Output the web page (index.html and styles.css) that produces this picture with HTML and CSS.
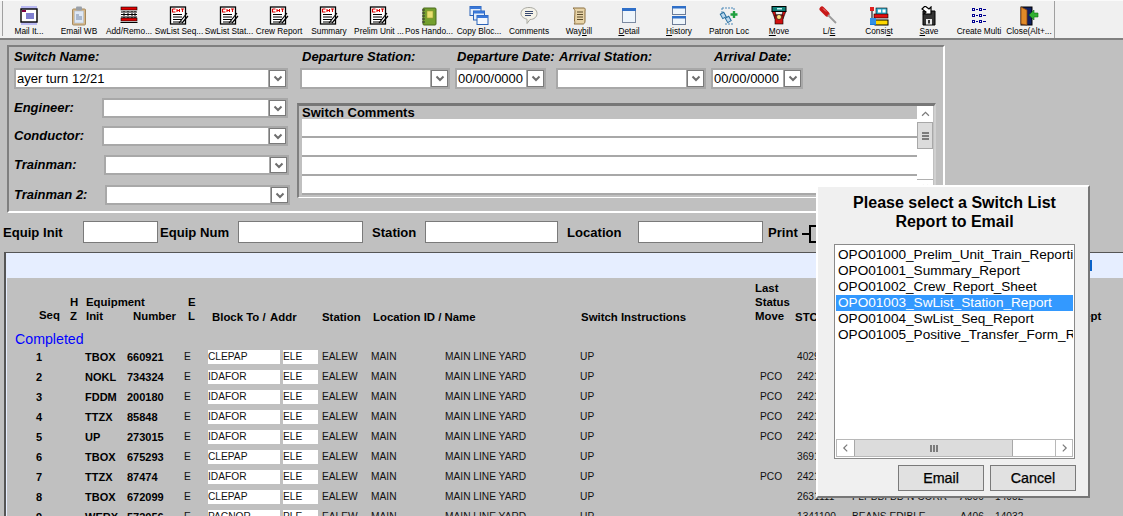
FILE: index.html
```html
<!DOCTYPE html>
<html lang="en">
<head>
<meta charset="utf-8">
<title>Switch List</title>
<link rel="stylesheet" href="styles.css">
</head>
<body>
<svg class="defs" width="0" height="0" aria-hidden="true">
  <symbol id="i-mail" viewBox="0 0 20 20">
    <rect x="2" y="0" width="16" height="19" fill="#b9b9f2"/>
    <rect x="2" y="3" width="16" height="13" fill="#fff" stroke="#000" stroke-width="1.4"/>
    <rect x="3" y="4" width="4" height="2" fill="#800040"/>
    <path d="M7 8h8M7 10h8M7 12h8" stroke="#0000a0" stroke-width="1.2"/>
  </symbol>
  <symbol id="i-clip" viewBox="0 0 20 20">
    <rect x="3.500" y="3" width="13" height="16" rx="1" fill="#d8b888" stroke="#a58a60"/>
    <rect x="5.500" y="5" width="9" height="12" fill="#dfe8f5" stroke="#b0bccc" stroke-width=".6"/>
    <rect x="7" y="0.500" width="6" height="4" rx="1" fill="#9aa0a8"/>
    <path d="M7 9h3M7 11h6M7 13h6" stroke="#7488a8"/>
  </symbol>
  <symbol id="i-grid" viewBox="0 0 20 20">
    <rect x="2" y="1" width="16" height="15" fill="#fff"/>
    <rect x="2" y="1" width="16" height="3" fill="#e00000" stroke="#000" stroke-width=".6"/>
    <rect x="2" y="12" width="16" height="3" fill="#e00000" stroke="#000" stroke-width=".6"/>
    <path d="M2 6h16M2 8.500h16M2 11h16M1.500 16.500h17" stroke="#000"/>
    <path d="M5 5v7M9 5v7M13 5v7M16 5v7" stroke="#000" stroke-dasharray="1 1"/>
  </symbol>
  <symbol id="i-report" viewBox="0 0 20 20">
    <rect x="1.500" y="1" width="15" height="17" fill="#fff" stroke="#000" stroke-width="1.300"/>
    <path d="M3.500 3h3M3.500 3v3h3M8 3v3M10.500 3v3M8 4.500h2.500M12 3h3M13.500 3v3" stroke="#e00000" fill="none" stroke-width="1.100"/>
    <path d="M4 8.500h9M4 11h9M4 13.500h9M4 16h9" stroke="#000" stroke-width="1.100"/>
    <path d="M18 7L10 17M19 10L13 17" stroke="#000" stroke-width="1.200"/>
  </symbol>
  <symbol id="i-book" viewBox="0 0 20 20">
    <rect x="4" y="2" width="13" height="17" rx="1" fill="#74a02e" stroke="#4b6a1c"/>
    <rect x="8" y="5" width="6" height="7" fill="#e8e070" stroke="#9a9a30" stroke-width=".6"/>
    <path d="M3 4h3M3 7h3M3 10h3M3 13h3M3 16h3" stroke="#333"/>
  </symbol>
  <symbol id="i-copy" viewBox="0 0 20 20">
    <rect x="1" y="0.500" width="11" height="9" fill="#e4eefb" stroke="#2a62b8"/>
    <rect x="1" y="0.500" width="11" height="2.500" fill="#3a78d8"/>
    <rect x="4.500" y="5" width="11" height="9" fill="#e4eefb" stroke="#2a62b8"/>
    <rect x="4.500" y="5" width="11" height="2.500" fill="#3a78d8"/>
    <rect x="8" y="9.500" width="11" height="9" fill="#f4f8fe" stroke="#2a62b8"/>
    <rect x="8" y="9.500" width="11" height="2.500" fill="#3a78d8"/>
  </symbol>
  <symbol id="i-bubble" viewBox="0 0 20 20">
    <path d="M10 1.500c5 0 8 2.500 8 6s-3 6-7 6l-3 4v-4.300c-3-.7-6-2.500-6-5.700 0-3.500 3-6 8-6z" fill="#f4f2e8" stroke="#a8a8a0"/>
    <path d="M6 5.500h8M6 7.500h8M6 9.500h6" stroke="#3a4a70"/>
  </symbol>
  <symbol id="i-scroll" viewBox="0 0 20 20">
    <path d="M4 2h11c1 0 1.500 1 1 3v10c0 2-1 3-2 3H5c1-1 1-2 .5-3l.5-10C6 4 5 3 4 2z" fill="#e8d4a8" stroke="#8a6e3e"/>
    <path d="M8 6h6M8 8.500h6M8 11h6M8 13.500h6" stroke="#5a4a2a"/>
  </symbol>
  <symbol id="i-window" viewBox="0 0 20 20">
    <rect x="3.500" y="2.500" width="13" height="14" fill="#eef5fb" stroke="#7c8aa0"/>
    <rect x="3" y="2" width="14" height="3" fill="#2f6fc8"/>
  </symbol>
  <symbol id="i-history" viewBox="0 0 20 20">
    <rect x="3.500" y="0.500" width="13" height="8" fill="#eef5fb" stroke="#6c7c98"/>
    <rect x="3" y="0" width="14" height="2.500" fill="#2f6fc8"/>
    <rect x="3.500" y="10.500" width="13" height="8" fill="#eef5fb" stroke="#6c7c98"/>
    <rect x="3" y="10" width="14" height="2.500" fill="#2f6fc8"/>
  </symbol>
  <symbol id="i-patron" viewBox="0 0 20 20">
    <path d="M3 2h12v5M3 2v6M6 18h8" stroke="#4a88b8" stroke-dasharray="2 1" fill="none"/>
    <rect x="2" y="7" width="4" height="5" fill="#bcd8ee" stroke="#2a70a0" transform="rotate(-30 4 9)"/>
    <rect x="7" y="11" width="4" height="5" fill="#bcd8ee" stroke="#2a70a0" transform="rotate(-30 9 13)"/>
    <path d="M15 5v7M11.500 8.500h7" stroke="#20a040" stroke-width="2.400"/>
  </symbol>
  <symbol id="i-move" viewBox="0 0 20 20">
    <path d="M3 5l3 8h8l3-8h-3l-1 4h-6l-1-4z" fill="#d01010" stroke="#000" stroke-width=".6"/>
    <rect x="6" y="9" width="8" height="9" fill="#d01010" stroke="#000" stroke-width=".6"/>
    <circle cx="10" cy="11" r="2.500" fill="#ffe080" stroke="#000" stroke-width=".6"/>
    <rect x="3" y="0.500" width="14" height="5" fill="#108078" stroke="#000"/>
    <rect x="8" y="2" width="5" height="1.500" fill="#c8f0f0"/>
  </symbol>
  <symbol id="i-driver" viewBox="0 0 20 20">
    <path d="M3 3l5 5" stroke="#c81818" stroke-width="5" stroke-linecap="round"/>
    <path d="M4 2.500l3 3" stroke="#f08080" stroke-width="1"/>
    <path d="M9 9l8 8" stroke="#9a9a9a" stroke-width="1.800"/>
  </symbol>
  <symbol id="i-consist" viewBox="0 0 20 20">
    <rect x="7" y="2" width="11" height="8" fill="#30b0d0" stroke="#000" stroke-width=".6"/>
    <rect x="9" y="3.500" width="3" height="3" fill="#fff"/><rect x="13.500" y="3.500" width="3" height="3" fill="#fff"/>
    <path d="M1 1h4v4H1z" fill="#e02020"/>
    <path d="M3 5v7" stroke="#000"/>
    <rect x="5" y="8" width="14" height="4" fill="#e01010" stroke="#000" stroke-width=".6"/>
    <rect x="6" y="14" width="13" height="5" fill="#ffd800" stroke="#000" stroke-width="1"/>
    <rect x="1" y="12" width="6" height="7" fill="#1078e0"/>
    <path d="M1.500 13h5M1.500 15h5M1.500 17h5" stroke="#8fd8ff" stroke-dasharray="1 1"/>
  </symbol>
  <symbol id="i-save" viewBox="0 0 20 20">
    <path d="M4 5h12v14H4z" fill="#333" stroke="#000"/>
    <rect x="7" y="13" width="6" height="5.500" fill="#e8e8e8"/>
    <rect x="9" y="14" width="2" height="3.500" fill="#333"/>
    <path d="M6 0l4 3 2-2v7H5l2-2-4-3z" fill="#fff" stroke="#000" stroke-width="1.200"/>
  </symbol>
  <symbol id="i-multi" viewBox="0 0 20 20">
    <g fill="#fff" stroke="#000090">
      <rect x="3.500" y="2.500" width="2" height="2"/><rect x="10.500" y="2.500" width="2" height="2"/>
      <rect x="3.500" y="8.500" width="2" height="2"/><rect x="10.500" y="8.500" width="2" height="2"/>
      <rect x="3.500" y="14.500" width="2" height="2"/><rect x="10.500" y="14.500" width="2" height="2"/>
    </g>
    <path d="M7 3.500h2M14 3.500h3M7 9.500h2M14 9.500h3M7 15.500h2M14 15.500h3" stroke="#000090"/>
  </symbol>
  <symbol id="i-door" viewBox="0 0 20 20">
    <rect x="2" y="1" width="11" height="18" fill="#102060" stroke="#000"/>
    <path d="M2 1l6 3v15l-6-1z" fill="#e08a28" stroke="#804010" stroke-width=".8"/>
    <path d="M19 7h-4V4l-5 5 5 5v-3h4z" fill="#30b030" stroke="#107010" stroke-width=".6"/>
  </symbol>
  <symbol id="i-chev" viewBox="0 0 10 7">
    <path d="M1.500 1.500L5 5l3.500-3.500" fill="none" stroke="#6e6e6e" stroke-width="2"/>
  </symbol>
  <symbol id="i-chev-up" viewBox="0 0 10 7">
    <path d="M1 5.500L5 1.500l4 4" fill="none" stroke="#7a7a7a" stroke-width="1.400"/>
  </symbol>
</svg>

<div class="page">
  <nav class="toolbar">
    <a class="tool"><svg class="icon"><use href="#i-mail"/></svg><span>Mail It...</span></a>
    <a class="tool"><svg class="icon"><use href="#i-clip"/></svg><span>Email WB</span></a>
    <a class="tool"><svg class="icon"><use href="#i-grid"/></svg><span>Add/Remo...</span></a>
    <a class="tool"><svg class="icon"><use href="#i-report"/></svg><span>SwList Seq...</span></a>
    <a class="tool"><svg class="icon"><use href="#i-report"/></svg><span>SwList Stat...</span></a>
    <a class="tool"><svg class="icon"><use href="#i-report"/></svg><span>Crew Report</span></a>
    <a class="tool"><svg class="icon"><use href="#i-report"/></svg><span>Summary</span></a>
    <a class="tool"><svg class="icon"><use href="#i-report"/></svg><span>Prelim Unit ...</span></a>
    <a class="tool"><svg class="icon"><use href="#i-book"/></svg><span>Pos Hando...</span></a>
    <a class="tool"><svg class="icon"><use href="#i-copy"/></svg><span>Copy Bloc...</span></a>
    <a class="tool"><svg class="icon"><use href="#i-bubble"/></svg><span>Comments</span></a>
    <a class="tool"><svg class="icon"><use href="#i-scroll"/></svg><span>Way<u>b</u>ill</span></a>
    <a class="tool"><svg class="icon"><use href="#i-window"/></svg><span><u>D</u>etail</span></a>
    <a class="tool"><svg class="icon"><use href="#i-history"/></svg><span><u>H</u>istory</span></a>
    <a class="tool"><svg class="icon"><use href="#i-patron"/></svg><span>Patron Loc</span></a>
    <a class="tool"><svg class="icon"><use href="#i-move"/></svg><span><u>M</u>ove</span></a>
    <a class="tool"><svg class="icon"><use href="#i-driver"/></svg><span>L/<u>E</u></span></a>
    <a class="tool"><svg class="icon"><use href="#i-consist"/></svg><span>Consi<u>s</u>t</span></a>
    <a class="tool"><svg class="icon"><use href="#i-save"/></svg><span><u>S</u>ave</span></a>
    <a class="tool"><svg class="icon"><use href="#i-multi"/></svg><span>Create Multi</span></a>
    <a class="tool"><svg class="icon"><use href="#i-door"/></svg><span>Close(Alt+...</span></a>
    <div class="toolbar-rest"></div>
  </nav>

  <section class="form">
    <div class="form-top">
      <div class="field f-name"><label class="flabel">Switch Name:</label>
        <div class="combo"><div class="combo-val">ayer turn 12/21</div><div class="combo-btn"><svg class="chev"><use href="#i-chev"/></svg></div></div></div>
      <div class="field f-dep"><label class="flabel">Departure Station:</label>
        <div class="combo"><div class="combo-val"></div><div class="combo-btn"><svg class="chev"><use href="#i-chev"/></svg></div></div></div>
      <div class="field f-date"><label class="flabel">Departure Date:</label>
        <div class="combo"><div class="combo-val">00/00/0000</div><div class="combo-btn"><svg class="chev"><use href="#i-chev"/></svg></div></div></div>
      <div class="field f-arr"><label class="flabel">Arrival Station:</label>
        <div class="combo"><div class="combo-val"></div><div class="combo-btn"><svg class="chev"><use href="#i-chev"/></svg></div></div></div>
      <div class="field f-date f-date-last"><label class="flabel">Arrival Date:</label>
        <div class="combo"><div class="combo-val">00/00/0000</div><div class="combo-btn"><svg class="chev"><use href="#i-chev"/></svg></div></div></div>
    </div>
    <div class="form-lower">
      <div class="crew">
        <div class="crew-row r-eng"><label class="flabel">Engineer:</label>
          <div class="combo"><div class="combo-val"></div><div class="combo-btn"><svg class="chev"><use href="#i-chev"/></svg></div></div></div>
        <div class="crew-row r-con"><label class="flabel">Conductor:</label>
          <div class="combo"><div class="combo-val"></div><div class="combo-btn"><svg class="chev"><use href="#i-chev"/></svg></div></div></div>
        <div class="crew-row r-tr1"><label class="flabel">Trainman:</label>
          <div class="combo"><div class="combo-val"></div><div class="combo-btn"><svg class="chev"><use href="#i-chev"/></svg></div></div></div>
        <div class="crew-row r-tr2"><label class="flabel">Trainman 2:</label>
          <div class="combo"><div class="combo-val"></div><div class="combo-btn"><svg class="chev"><use href="#i-chev"/></svg></div></div></div>
      </div>
      <div class="comments">
        <div class="comments-main">
          <div class="comments-title">Switch Comments</div>
          <div class="comment-line"></div>
          <div class="comment-line"></div>
          <div class="comment-line"></div>
          <div class="comment-line"></div>
        </div>
        <div class="vscroll">
          <div class="vbtn"><svg class="chev-up"><use href="#i-chev-up"/></svg></div>
          <div class="vthumb"><i></i><i></i><i></i></div>
          <div class="vtrack"></div>
          <div class="vbtn vbtn-end"><svg class="chev-up"><use href="#i-chev"/></svg></div>
        </div>
      </div>
    </div>
  </section>

  <div class="search">
    <label class="slabel s1">Equip Init</label><input class="sinput w-init" type="text">
    <label class="slabel s2">Equip Num</label><input class="sinput w-num" type="text">
    <label class="slabel s3 s-sta">Station</label><input class="sinput w-sta" type="text">
    <label class="slabel s3 s-loc">Location</label><input class="sinput w-loc" type="text">
    <label class="slabel s4">Print</label>
    <span class="tree"></span>
  </div>

  <section class="list">
    <div class="list-strip"><span class="strip-mark"></span></div>
    <div class="list-body">
      <table class="grid">
        <colgroup>
          <col class="c-seq"><col class="c-hz"><col class="c-init"><col class="c-num"><col class="c-e"><col class="c-block"><col class="c-addr"><col class="c-sta"><col class="c-loc"><col class="c-name"><col class="c-ins"><col class="c-last"><col class="c-stc"><col class="c-desc"><col class="c-a"><col class="c-b"><col class="c-rest">
        </colgroup>
        <thead>
          <tr>
            <th class="th-seq">Seq</th>
            <th class="th-hz">H<br>Z</th>
            <th class="th-init">Equipment<br>Init</th>
            <th class="th-num">Number</th>
            <th class="th-e">E<br>L</th>
            <th class="th-block" colspan="2"><span class="block-to">Block To /</span><span>Addr</span></th>
            <th class="th-sta">Station</th>
            <th class="th-loc" colspan="2">Location ID / Name</th>
            <th class="th-ins">Switch Instructions</th>
            <th class="th-last">Last<br>Status<br>Move</th>
            <th class="th-stc">STC</th>
            <th></th><th></th><th></th>
            <th class="th-dept">Dept</th>
          </tr>
        </thead>
        <tbody>
          <tr class="group"><td colspan="17">Completed</td></tr>
          <tr><td class="seq">1</td><td></td><td class="b">TBOX</td><td class="b">660921</td><td>E</td><td><span class="cell-in">CLEPAP</span></td><td><span class="cell-in">ELE</span></td><td>EALEW</td><td>MAIN</td><td>MAIN LINE YARD</td><td>UP</td><td class="pco"></td><td class="stc">4029110</td><td></td><td></td><td></td><td></td></tr>
          <tr><td class="seq">2</td><td></td><td class="b">NOKL</td><td class="b">734324</td><td>E</td><td><span class="cell-in">IDAFOR</span></td><td><span class="cell-in">ELE</span></td><td>EALEW</td><td>MAIN</td><td>MAIN LINE YARD</td><td>UP</td><td class="pco">PCO</td><td class="stc">2421120</td><td></td><td></td><td></td><td></td></tr>
          <tr><td class="seq">3</td><td></td><td class="b">FDDM</td><td class="b">200180</td><td>E</td><td><span class="cell-in">IDAFOR</span></td><td><span class="cell-in">ELE</span></td><td>EALEW</td><td>MAIN</td><td>MAIN LINE YARD</td><td>UP</td><td class="pco">PCO</td><td class="stc">2421120</td><td></td><td></td><td></td><td></td></tr>
          <tr><td class="seq">4</td><td></td><td class="b">TTZX</td><td class="b">85848</td><td>E</td><td><span class="cell-in">IDAFOR</span></td><td><span class="cell-in">ELE</span></td><td>EALEW</td><td>MAIN</td><td>MAIN LINE YARD</td><td>UP</td><td class="pco">PCO</td><td class="stc">2421120</td><td></td><td></td><td></td><td></td></tr>
          <tr><td class="seq">5</td><td></td><td class="b">UP</td><td class="b">273015</td><td>E</td><td><span class="cell-in">IDAFOR</span></td><td><span class="cell-in">ELE</span></td><td>EALEW</td><td>MAIN</td><td>MAIN LINE YARD</td><td>UP</td><td class="pco">PCO</td><td class="stc">2421120</td><td></td><td></td><td></td><td></td></tr>
          <tr><td class="seq">6</td><td></td><td class="b">TBOX</td><td class="b">675293</td><td>E</td><td><span class="cell-in">CLEPAP</span></td><td><span class="cell-in">ELE</span></td><td>EALEW</td><td>MAIN</td><td>MAIN LINE YARD</td><td>UP</td><td class="pco"></td><td class="stc">3691100</td><td></td><td></td><td></td><td></td></tr>
          <tr><td class="seq">7</td><td></td><td class="b">TTZX</td><td class="b">87474</td><td>E</td><td><span class="cell-in">IDAFOR</span></td><td><span class="cell-in">ELE</span></td><td>EALEW</td><td>MAIN</td><td>MAIN LINE YARD</td><td>UP</td><td class="pco">PCO</td><td class="stc">2421120</td><td></td><td></td><td></td><td></td></tr>
          <tr><td class="seq">8</td><td></td><td class="b">TBOX</td><td class="b">672099</td><td>E</td><td><span class="cell-in">CLEPAP</span></td><td><span class="cell-in">ELE</span></td><td>EALEW</td><td>MAIN</td><td>MAIN LINE YARD</td><td>UP</td><td class="pco"></td><td class="stc">2631111</td><td>FLPBBI BD N CORR</td><td>A800</td><td>14052</td><td></td></tr>
          <tr><td class="seq">9</td><td></td><td class="b">WERX</td><td class="b">572056</td><td>E</td><td><span class="cell-in">PACNOR</span></td><td><span class="cell-in">PLE</span></td><td>EALEW</td><td>MAIN</td><td>MAIN LINE YARD</td><td>UP</td><td class="pco"></td><td class="stc">1341100</td><td>BEANS EDIBLE</td><td>A406</td><td>14032</td><td></td></tr>
        </tbody>
      </table>
    </div>
  </section>

  <aside class="dialog">
    <h2 class="dialog-title">Please select a Switch List<br>Report to Email</h2>
    <div class="listbox">
      <ul class="options">
        <li>OPO01000_Prelim_Unit_Train_Reporting</li>
        <li>OPO01001_Summary_Report</li>
        <li>OPO01002_Crew_Report_Sheet</li>
        <li class="selected">OPO01003_SwList_Station_Report</li>
        <li>OPO01004_SwList_Seq_Report</li>
        <li>OPO01005_Positive_Transfer_Form_Report</li>
      </ul>
      <div class="hscroll">
        <div class="hbtn"><svg class="chev-h"><use href="#i-chev-up"/></svg></div>
        <div class="hthumb"><i></i><i></i><i></i></div>
        <div class="htrack"></div>
        <div class="hbtn hbtn-end"><svg class="chev-h chev-r"><use href="#i-chev-up"/></svg></div>
      </div>
    </div>
    <div class="dialog-actions">
      <button class="dbtn" type="button">Email</button>
      <button class="dbtn" type="button">Cancel</button>
    </div>
  </aside>
</div>
</body>
</html>
```
FILE: styles.css
```css
* { box-sizing: border-box; }
html, body { margin: 0; padding: 0; height: 516px; overflow: hidden; background: #c0c0c0; }
body { font-family: "Liberation Sans", Arial, sans-serif; color: #000; }
.defs { position: absolute; }
.page { position: relative; width: 1123px; height: 516px; overflow: hidden; }

/* toolbar */
.toolbar { display: flex; height: 40px; padding-left: 3px; background: #f0f0f0; border-top: 1px solid #fafafa; border-bottom: 2px solid #808080; }
.toolbar::before { content: ""; width: 1px; background: #a0a0a0; margin-bottom: 2px; flex: none; margin-left: -1px; margin-right: 1px; }
.tool { width: 50px; flex: none; display: flex; flex-direction: column; align-items: center; }
.icon { width: 20px; height: 20px; margin-top: 5px; flex: none; }
.tool span { margin-top: 0; font-size: 8.300px; line-height: 11px; white-space: nowrap; color: #000; }
.toolbar-rest { flex: 1; border-left: 1px solid #a0a0a0; }

/* form */
.form { width: 938px; height: 168px; margin: 5px 0 0 7px; padding-left: 5px; border: 2px solid #7f7f7f; border-right-color: #fff; border-bottom-color: #fff; }
.form-top { display: flex; height: 51px; }
.field { display: flex; flex-direction: column; flex: none; }
.flabel { font-size: 13px; font-weight: bold; font-style: italic; line-height: 20px; height: 20px; color: #000; white-space: nowrap; }
.field .flabel { height: 21px; }
.f-name { width: 288px; }
.f-dep { width: 155px; }
.f-date { width: 102px; }
.f-arr { width: 155px; }
.f-name .combo { width: 274px; }
.f-dep .combo { width: 150px; margin-left: -2px; }
.f-date .combo { width: 91px; margin-left: -2px; }
.f-arr .combo { width: 150px; margin-left: -3px; }
.f-date-last .combo { width: 92px; margin-left: -3px; }

.combo { display: flex; height: 21px; padding: 2px; background: #a8a8a8; gap: 1px; }
.combo-val { flex: 1; min-width: 0; background: #fff; font-size: 13px; line-height: 17px; padding-left: 1px; white-space: nowrap; overflow: hidden; color: #000; }
.combo-btn { width: 17px; flex: none; display: flex; align-items: center; justify-content: center; background: #fff; border: 1px solid #7a7a7a; }
.chev { width: 10px; height: 7px; }

.form-lower { display: flex; }
.crew { width: 283px; flex: none; display: flex; flex-direction: column; }
.crew-row { display: flex; align-items: center; flex: none; height: 20px; }
.crew-row .combo { height: 20px; flex: none; }
.crew-row .flabel { flex: none; }
.r-eng .flabel { width: 88px; }
.r-eng .combo { width: 186px; }
.r-con { margin-top: 8px; }
.r-con .flabel { width: 88px; }
.r-con .combo { width: 186px; }
.r-tr1 { margin-top: 9px; }
.r-tr1 .flabel { width: 90px; }
.r-tr1 .combo { width: 185px; }
.r-tr2 { margin-top: 10px; }
.r-tr2 .flabel { width: 91px; }
.r-tr2 .combo { width: 185px; }

.comments { display: flex; width: 639px; height: 95px; margin-top: 5px; padding: 0 0 3px 3px; background: #c0c0c0; border-top: 3px solid #777; border-left: 2px solid #808080; border-right: 2px solid #d0d0d0; border-bottom: 1px solid #fff; }
.comments-main { width: 615px; flex: none; }
.comments-title { font-size: 13px; font-weight: bold; line-height: 13px; height: 13px; color: #000; }
.comment-line { height: 19px; background: #fff; border-bottom: 2px solid #a8a8a8; }
.vscroll { width: 16px; flex: none; display: flex; flex-direction: column; background: #fff; height: 100%; }
.vbtn { height: 15px; flex: none; display: flex; align-items: center; justify-content: center; background: #fff; }
.vbtn-end { border-top: 1px solid #b0b0b0; }
.chev-up { width: 9px; height: 6px; }
.vthumb { height: 27px; flex: none; margin-top: 1px; background: #dcdcdc; border: 1px solid #a8a8a8; display: flex; flex-direction: column; gap: 1px; align-items: center; justify-content: center; }
.vthumb i { width: 7px; height: 2px; background: #7c7c7c; }
.vtrack { flex: 1; }

/* search row */
.search { display: flex; align-items: center; height: 22px; margin-top: 8px; padding-left: 3px; }
.slabel { font-size: 13.100px; font-weight: bold; flex: none; color: #000; white-space: nowrap; }
.s1 { width: 80px; }
.s2 { width: 78px; margin-left: 2px; }
.s3 { margin: 0 9px; }
.s-sta { width: 44px; }
.s-loc { width: 55px; }
.s4 { margin-left: 5px; width: 34px; }
.sinput { height: 22px; flex: none; background: #fff; border: 1px solid #7a7a7a; border-radius: 0; padding: 0; margin: 0; }
.w-init { width: 75px; }
.w-num { width: 125px; }
.w-sta { width: 133px; }
.w-loc { width: 125px; margin-left: 7px; }
.tree { position: relative; width: 10px; height: 18px; flex: none; margin-top: 4px; margin-left: 7px; border: 2px solid #000; border-right: 0; }
.tree::before { content: ""; position: absolute; left: -9px; top: 6px; width: 7px; height: 2px; background: #000; }

/* list */
.list { margin: 9px 0 0 4px; height: 280px; border-left: 2px solid #555; border-top: 1px solid #555; background: #e6eeff; }
.list-strip { height: 25px; display: flex; align-items: center; }
.strip-mark { width: 2px; height: 11px; margin-left: 1084px; background: #0a62c8; }
.list-body { margin-left: 1px; height: 300px; background: #c0c0c0; }
.grid { width: 1116px; table-layout: fixed; border-collapse: collapse; font-size: 10.200px; color: #111; }
.grid td, .grid th { padding: 0; text-align: left; white-space: nowrap; }
.grid thead tr { height: 46px; }
.grid th { vertical-align: bottom; font-size: 11.400px; line-height: 14px; padding-bottom: 1px; color: #000; font-weight: bold; }
.grid tbody tr { height: 20px; }
.grid tbody td { vertical-align: middle; line-height: 14px; }
.c-seq { width: 63px; } .c-hz { width: 15px; } .c-init { width: 42px; } .c-num { width: 57px; } .c-e { width: 24px; }
.c-block { width: 75px; } .c-addr { width: 39px; } .c-sta { width: 49px; } .c-loc { width: 74px; } .c-name { width: 135px; }
.c-ins { width: 175px; } .c-last { width: 40px; } .c-stc { width: 57px; } .c-desc { width: 108px; } .c-a { width: 35px; } .c-b { width: 81px; }
.grid .th-seq { padding-left: 32px; padding-bottom: 2px; }
.grid .th-init { padding-left: 1px; }
.grid .th-num { padding-left: 6px; }
.grid .th-e { padding-left: 4px; }
.grid .th-block { padding-left: 4px; padding-bottom: 0; }
.grid .th-sta, .grid .th-ins, .grid .th-stc { padding-bottom: 0; }
.block-to { display: inline-block; width: 58px; }
.grid .th-loc { padding-left: 2px; padding-bottom: 0; }
.grid .th-ins { padding-left: 1px; }
.grid .group { height: 23px; }
.grid .group td { font-size: 14.200px; color: #0000ff; padding: 7px 0 0 8px; line-height: 16px; }
.grid .seq { padding-left: 29px; font-weight: bold; font-size: 11px; color: #000; }
.grid .b { font-weight: bold; font-size: 11px; color: #000; }
.cell-in { display: block; width: 72px; height: 14px; background: #fff; line-height: 14px; color: #111; }
td + td + td + td + td + td + td .cell-in { width: 35px; }
.grid .pco { padding-left: 5px; }
.grid .stc { padding-left: 2px; }

/* dialog */
.dialog { position: absolute; left: 816px; top: 185px; width: 274px; height: 313px; padding: 0 13px 0 16px; background: #f0f0f0; border: 2px solid #777; border-left-color: #fff; border-top-color: #fff; display: flex; flex-direction: column; }
.dialog-title { margin: 6px 0 0; font-size: 16px; line-height: 19px; font-weight: bold; text-align: center; color: #000; }
.listbox { display: flex; flex-direction: column; width: 241px; height: 215px; margin-top: 13px; padding: 1px; background: #fff; border: 1px solid #8a8a8a; }
.options { list-style: none; margin: 0; padding: 1px 0 0; flex: 1; min-height: 0; font-size: 13.600px; line-height: 16px; overflow: hidden; color: #000; }
.options li { white-space: nowrap; overflow: hidden; padding-left: 2px; }
.options .selected { background: #3399ff; color: #fff; }
.hscroll { display: flex; height: 18px; flex: none; border: 1px solid #b8b8b8; background: #fff; }
.hbtn { width: 17px; flex: none; display: flex; align-items: center; justify-content: center; }
.hbtn-end { border-left: 1px solid #b8b8b8; }
.chev-h { width: 9px; height: 6px; transform: rotate(-90deg); }
.chev-r { transform: rotate(90deg); }
.hthumb { width: 159px; flex: none; display: flex; gap: 1px; align-items: center; justify-content: center; background: #dcdcdc; border-left: 1px solid #a8a8a8; border-right: 1px solid #a8a8a8; }
.hthumb i { width: 2px; height: 7px; background: #7c7c7c; }
.htrack { flex: 1; }
.dialog-actions { display: flex; gap: 6px; justify-content: flex-end; margin-top: 6px; margin-right: -1px; }
.dbtn { width: 86px; height: 26px; padding: 0; background: #e1e1e1; border: 1px solid #7a7a7a; border-radius: 0; font-family: "Liberation Sans", Arial, sans-serif; font-size: 14.300px; color: #000; -webkit-text-stroke: .25px #000; }
```
